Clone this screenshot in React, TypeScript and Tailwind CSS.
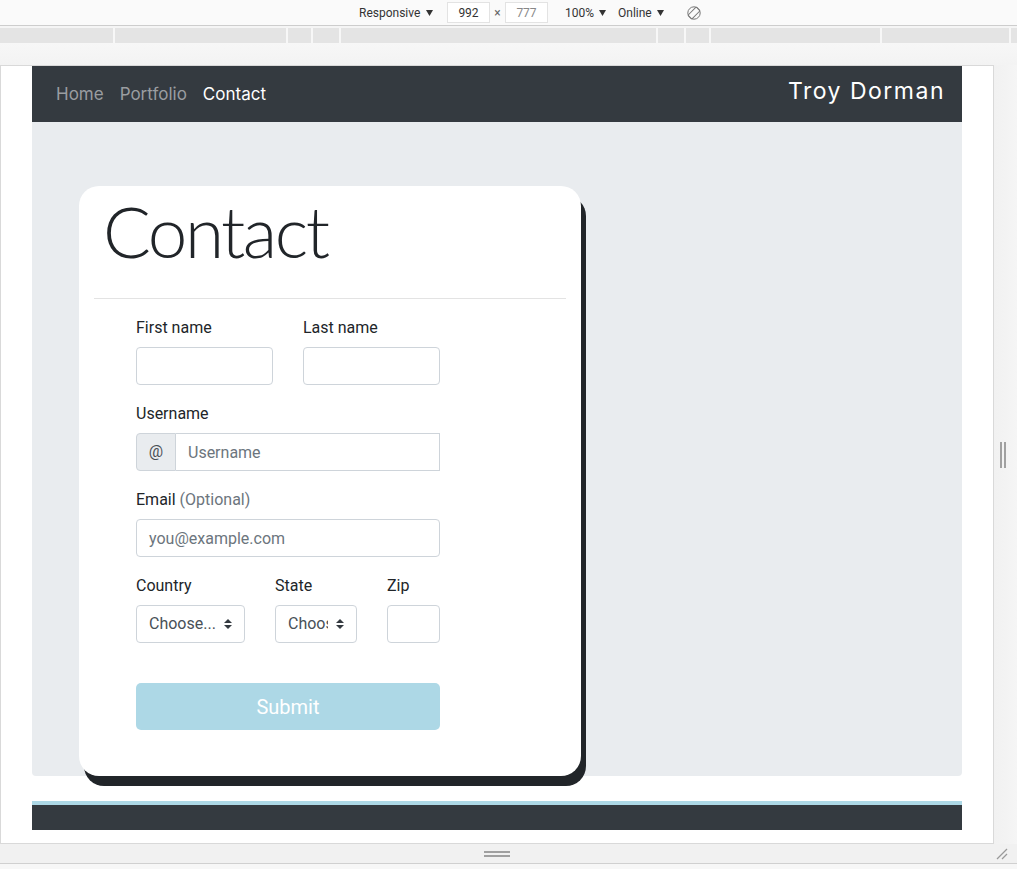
import React from 'react'

function Caret() {
  return (
    <svg width="7" height="6" viewBox="0 0 7 6" className="shrink-0">
      <path d="M0 0h7L3.5 6z" fill="#333" />
    </svg>
  )
}

function SelectArrow() {
  return (
    <svg width="8" height="10" viewBox="0 0 4 5" className="shrink-0">
      <path d="M2 0L0 2h4zm0 5L0 3h4z" fill="#343a40" />
    </svg>
  )
}

function Label({ children }: { children: React.ReactNode }) {
  return <div className="h-6 mb-2 text-[16px] leading-6 text-[#212529] pt-[1px]">{children}</div>
}

function Select({ width }: { width: string }) {
  return (
    <div className={`${width} h-[38px] border border-[#ced4da] rounded-[4px] bg-white flex items-center pl-3 pr-3`}>
      <span className="flex-1 min-w-0 mr-2 overflow-hidden whitespace-nowrap text-[16px] text-[#495057]">Choose...</span>
      <SelectArrow />
    </div>
  )
}

const mediaSegments = [113, 171, 23, 26, 315, 26, 23, 169, 127, 20]

export default function App() {
  return (
    <div className="w-[1017px] h-[869px] flex flex-col overflow-hidden bg-[#f7f7f7] font-['Roboto',sans-serif]">
      {/* device toolbar */}
      <div className="h-[26px] shrink-0 flex items-center bg-[#fafafa] border-b border-[#cdcdcd] text-[12px] text-[#333]">
        <div className="ml-[359px] w-[70px] flex items-center gap-[6px]">
          <span>Responsive</span>
          <Caret />
        </div>
        <div className="ml-[18px] w-[43px] h-[21px] bg-white border border-[#e3e3e3] flex items-center justify-center">992</div>
        <div className="w-[15px] text-center text-[#666]">×</div>
        <div className="w-[43px] h-[21px] bg-white border border-[#e3e3e3] flex items-center justify-center text-[#888]">777</div>
        <div className="ml-[17px] w-[42px] flex items-center gap-[5px]">
          <span>100%</span>
          <Caret />
        </div>
        <div className="ml-[11px] w-[46px] flex items-center gap-[5px]">
          <span>Online</span>
          <Caret />
        </div>
        <svg width="14" height="14" viewBox="0 0 14 14" className="ml-[23px]" fill="none" stroke="#777" strokeWidth="1">
          <circle cx="7" cy="7" r="6.2" />
          <rect x="4.3" y="1.2" width="5.4" height="11.6" rx="1" transform="rotate(45 7 7)" />
        </svg>
      </div>

      {/* media query bar */}
      <div className="h-[2px] shrink-0 bg-[#f5f5f5]" />
      <div className="h-[15px] shrink-0 flex gap-[2px] bg-[#f7f7f7]">
        {mediaSegments.map((w, i) => (
          <div key={i} className="h-full bg-[#e4e4e4] shrink-0" style={{ width: w }} />
        ))}
      </div>
      <div className="h-[22px] shrink-0 bg-gradient-to-b from-[#f7f7f7] to-[#f3f3f3]" />

      {/* device + right handle */}
      <div className="h-[779px] shrink-0 flex">
        <div className="w-[994px] h-full border border-[#d9d9d9] bg-white">
          <div className="w-[992px] h-[777px] px-[31px]">
            {/* navbar */}
            <div className="h-[56px] bg-[#343a40] flex items-center justify-between pl-4 pr-[17px] font-['Inter',sans-serif]">
              <div className="flex items-center text-[17px] mt-[1px]">
                <span className="px-2 text-[#9a9da0]">Home</span>
                <span className="px-2 text-[#9a9da0]">Portfolio</span>
                <span className="px-2 text-white">Contact</span>
              </div>
              <div className="text-[23px] text-white tracking-[1.5px] -mt-[6px]">Troy Dorman</div>
            </div>

            {/* jumbotron */}
            <div className="h-[654px] bg-[#e9ecef] rounded-b-[4px] pt-16 pl-[47px]">
              <div className="w-[502px] h-[590px] bg-white rounded-[20px] shadow-[5px_10px_0_#212529] flex flex-col">
                <div className="h-[112px] pl-[24px] pt-[2px] font-['Lato',sans-serif] font-light text-[71px] leading-[1.2] text-[#212529] tracking-[-2.5px]">
                  Contact
                </div>
                <div className="mx-[15px] border-t border-[#e3e3e3]" />

                <div className="ml-[57px] w-[304px] mt-4">
                  <div className="flex gap-[30px] mb-4">
                    <div className="w-[137px]">
                      <Label>First name</Label>
                      <div className="h-[38px] border border-[#ced4da] rounded-[4px]" />
                    </div>
                    <div className="w-[137px]">
                      <Label>Last name</Label>
                      <div className="h-[38px] border border-[#ced4da] rounded-[4px]" />
                    </div>
                  </div>

                  <div className="mb-4">
                    <Label>Username</Label>
                    <div className="flex h-[38px]">
                      <div className="w-[40px] h-full bg-[#e9ecef] border border-[#ced4da] rounded-l-[4px] flex items-center justify-center text-[16px] text-[#495057]">
                        @
                      </div>
                      <div className="flex-1 h-full border border-l-0 border-[#ced4da] flex items-center pl-3 pt-[1px] text-[16px] text-[#6c757d]">
                        Username
                      </div>
                    </div>
                  </div>

                  <div className="mb-4">
                    <Label>
                      Email <span className="text-[#6c757d]">(Optional)</span>
                    </Label>
                    <div className="h-[38px] border border-[#ced4da] rounded-[4px] flex items-center pl-3 pt-[1px] text-[16px] text-[#6c757d]">
                      you@example.com
                    </div>
                  </div>

                  <div className="flex">
                    <div className="w-[109px]">
                      <Label>Country</Label>
                      <Select width="w-[109px]" />
                    </div>
                    <div className="w-[82px] ml-[30px]">
                      <Label>State</Label>
                      <Select width="w-[82px]" />
                    </div>
                    <div className="w-[53px] ml-[30px]">
                      <Label>Zip</Label>
                      <div className="h-[38px] border border-[#ced4da] rounded-[4px]" />
                    </div>
                  </div>

                  <div className="mt-[40px] h-[47px] rounded-[5px] bg-[#add8e6] flex items-center justify-center text-[20px] text-white">
                    Submit
                  </div>
                </div>
              </div>
            </div>

            {/* footer */}
            <div className="mt-[25px] h-[4px] bg-[#add8e6]" />
            <div className="h-[25px] bg-[#343a40]" />
          </div>
        </div>
        <div className="flex-1 flex items-center pl-[6px] bg-gradient-to-r from-[#f1f1f1] to-[#f5f5f5]">
          <div className="flex gap-[2px] h-[26px]">
            <div className="w-[2px] h-full bg-[#a0a0a0]" />
            <div className="w-[2px] h-full bg-[#a0a0a0]" />
          </div>
        </div>
      </div>

      {/* bottom handle */}
      <div className="h-[20px] shrink-0 flex border-b border-[#d0d0d0] bg-[#f1f1f1]">
        <div className="w-[994px] flex flex-col items-center justify-center gap-[2px]">
          <div className="w-[26px] h-[2px] bg-[#a0a0a0]" />
          <div className="w-[26px] h-[2px] bg-[#a0a0a0]" />
        </div>
        <div className="flex-1 flex items-center pl-[2px]">
          <svg width="12" height="12" viewBox="0 0 12 12" stroke="#999" strokeWidth="1.2">
            <line x1="11" y1="1" x2="1" y2="11" />
            <line x1="11" y1="6" x2="6" y2="11" />
          </svg>
        </div>
      </div>
      <div className="flex-1 bg-[#f7f7f7]" />
    </div>
  )
}
